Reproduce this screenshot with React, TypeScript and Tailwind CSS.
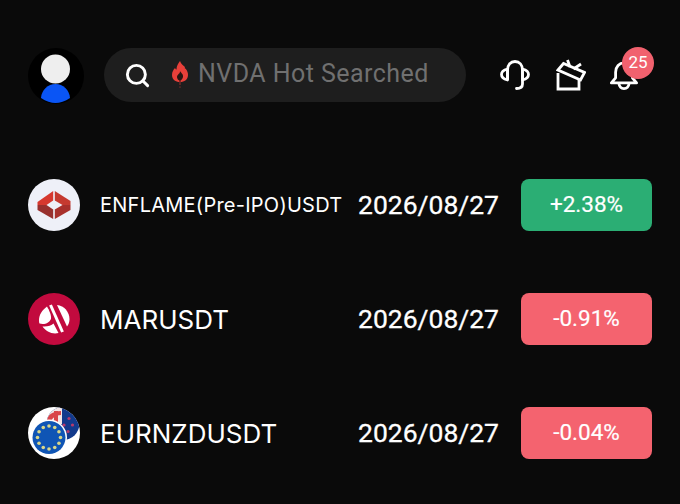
import { Search } from 'lucide-react';

const rows = [
  { name: 'ENFLAME(Pre-IPO)USDT', small: true, change: '+2.38%', up: true, logo: 'enflame' },
  { name: 'MARUSDT', small: false, change: '-0.91%', up: false, logo: 'maru' },
  { name: 'EURNZDUSDT', small: false, change: '-0.04%', up: false, logo: 'eurnzd' },
];

const Avatar = () => (
  <svg width="56" height="56" viewBox="0 0 56 56" className="shrink-0">
    <circle cx="28" cy="28" r="28" fill="#000" />
    <circle cx="27.5" cy="21" r="14.5" fill="#eeeeee" />
    <path d="M13 50C13.5 42 20 36 27.5 36S41.5 42 42 50C37 53.5 32 55 27.5 55S18 53.5 13 50Z" fill="#0a55f5" />
  </svg>
);

const Flame = () => (
  <svg width="18" height="28" viewBox="0 0 18 28" className="shrink-0">
    <path d="M9 0C10 3 12 4 14 6C13.5 7 14 8 14.5 7.5C16.5 10 17 12 17 14C17 18.5 13.5 21 9 21S1 18.5 1 14C1 11 2.5 8.5 4 7C4.5 8 5 8.5 5.5 8.5C5.5 5 7 3 9 0Z" fill="#e8403a" />
    <path d="M9 10C10 12 12.5 13 12 16C11.5 18 10.5 19 9.5 19.5L9.5 21H8.5L8.5 19.5C7 19 6 17.5 6 16C6 14.5 7 14 7.5 13C8.5 12.5 9 11.5 9 10Z" fill="#2a1512" />
    <rect x="8.2" y="21" width="1.6" height="3" fill="#6b2a28" />
    <rect x="8" y="25.5" width="2" height="1.2" fill="#5a2a28" />
  </svg>
);

const Headset = () => (
  <svg width="30" height="30" viewBox="0 0 30 30" fill="none" stroke="#fff" strokeWidth="2.8" strokeLinecap="round" strokeLinejoin="round" className="shrink-0">
    <path d="M7.5 19V10C7.5 5 10.5 1.5 15 1.5S22.5 5 22.5 10V24C22.5 26.5 20.5 28.5 16.5 28.5" />
    <path d="M7.5 9C3.5 10 1.5 12 1.5 14.5S3.5 19 7.5 20Z" />
    <path d="M22.5 9C26.5 10 28.5 12 28.5 14.5S26.5 19 22.5 20Z" />
  </svg>
);

const Gift = () => (
  <svg width="30" height="32" viewBox="0 0 30 32" fill="none" stroke="#fff" strokeWidth="2.8" strokeLinejoin="miter" className="shrink-0">
    <path d="M2 11L7.5 4.5L28.5 13.5L24.5 21L2 11Z" />
    <path d="M2 14V30H23V21" />
    <path d="M14 8L11.5 1M17.5 10L25 5" />
  </svg>
);

const Bell = () => (
  <svg width="28" height="30" viewBox="0 0 30 32" fill="none" stroke="#fff" strokeWidth="3" strokeLinecap="round" strokeLinejoin="round" className="shrink-0">
    <path d="M1.5 24.5H28.5L24 19V13C24 7 20 3 15 3S6 7 6 13V19L1.5 24.5Z" />
    <path d="M9.5 25C10 28.5 12 30.5 15 30.5S20 28.5 20.5 25" />
  </svg>
);

const Logo = ({ type }: { type: string }) => {
  if (type === 'enflame') {
    return (
      <svg width="52" height="52" viewBox="0 0 52 52" className="shrink-0">
        <circle cx="26" cy="26" r="26" fill="#eef0f8" />
        <path d="M25.2 12V21.5L18.5 26H9.5V23Z" fill="#d6382f" />
        <path d="M26.8 12L42.5 22V26H34.5L26.8 21.5Z" fill="#c53a30" />
        <path d="M9.5 26H18.5L25.2 30.5V40L9.5 31Z" fill="#98302e" />
        <path d="M26.8 30.5L34.5 26H42.5V31L26.8 40Z" fill="#a8302c" />
      </svg>
    );
  }
  if (type === 'maru') {
    return (
      <svg width="52" height="52" viewBox="0 0 52 52" className="shrink-0">
        <circle cx="26" cy="26" r="26" fill="#c20a3e" />
        <path d="M19 13.5C14 17 11 22 11 27C11 28.5 11 29.5 11.5 30.5C16 32 22 30 23 25.5C23.5 22 21 17 19 13.5Z" fill="#fff" />
        <path d="M14.5 33.5C19 34 23.5 32.5 25.5 30.5L30.5 40C24 41.5 18 38.5 14.5 33.5Z" fill="#fff" />
        <path d="M22.5 12L34.5 39" stroke="#fff" strokeWidth="3" fill="none" />
        <path d="M29 12C36 12.5 41.5 19 41.5 26C41.5 29 40.5 31.5 39 33.5L29 12Z" fill="#fff" />
      </svg>
    );
  }
  const stars = Array.from({ length: 12 }, (_, i) => {
    const a = (i * Math.PI) / 6;
    return { x: 21 + 11.5 * Math.sin(a), y: 30.5 - 11.5 * Math.cos(a) };
  });
  return (
    <svg width="52" height="52" viewBox="0 0 52 52" className="shrink-0">
      <defs>
        <clipPath id="eur-disc">
          <circle cx="26" cy="26" r="26" />
        </clipPath>
        <clipPath id="nz-disc">
          <circle cx="35" cy="16.5" r="16.5" />
        </clipPath>
      </defs>
      <circle cx="26" cy="26" r="26" fill="#fff" />
      <g clipPath="url(#eur-disc)">
        <g clipPath="url(#nz-disc)">
          <rect x="18" y="0" width="34" height="33" fill="#123a8c" />
          <rect x="18" y="0" width="16" height="17" fill="#f2e6e6" />
          <path d="M19 13C20 8 24 4.5 33 4V8C27 8.5 24 11 23 15Z" fill="#d9454a" />
          <path d="M26 4H30V16H26Z" fill="#d9454a" />
        </g>
        <circle cx="41" cy="11.5" r="1.6" fill="#b83a6c" />
        <circle cx="36" cy="18" r="1.6" fill="#b83a6c" />
        <circle cx="44.5" cy="18" r="1.6" fill="#b83a6c" />
        <circle cx="40" cy="24.5" r="1.6" fill="#b83a6c" />
      </g>
      <circle cx="21" cy="30.5" r="18" fill="#fff" />
      <circle cx="21" cy="30.5" r="16.5" fill="#0f55b5" />
      {stars.map((s, i) => (
        <circle key={i} cx={s.x} cy={s.y} r="1.8" fill="#d8d78a" />
      ))}
    </svg>
  );
};

export default function App() {
  return (
    <div className="w-[680px] h-[504px] bg-[#0a0a0a] overflow-hidden text-white font-['Roboto',sans-serif]">
      <header className="flex items-center pt-12 pl-7 pr-[42px]">
        <Avatar />
        <div className="ml-5 mb-[2px] w-[362px] h-[54px] rounded-full bg-[#1e1e1e] flex items-center pl-[20px]">
          <Search size={27} strokeWidth={2.6} color="#fff" className="shrink-0" />
          <div className="ml-[20px]"><Flame /></div>
          <span className="ml-[9px] mb-[3px] text-[25px] tracking-[0.45px] text-[#707070] whitespace-nowrap">NVDA Hot Searched</span>
        </div>
        <div className="ml-auto mb-[3px] flex items-center">
          <Headset />
          <div className="ml-[26px]"><Gift /></div>
          <div className="relative ml-[24px]">
            <Bell />
            <span className="absolute -top-[13px] -right-[16px] w-[32px] h-[32px] rounded-full bg-[#f1616e] flex items-center justify-center text-[17px] text-white">25</span>
          </div>
        </div>
      </header>

      <div className="mt-[75px] pl-7 pr-7 flex flex-col gap-[62px]">
        {rows.map((row) => (
          <div key={row.name} className="flex items-center h-[52px]">
            <Logo type={row.logo} />
            <span className={`ml-[20px] w-[258px] whitespace-nowrap font-['Inter',sans-serif] ${row.small ? 'text-[20px] tracking-[0.25px]' : 'text-[26px]'}`}>{row.name}</span>
            <span className="w-[163px] text-[26.5px] [-webkit-text-stroke:0.3px_white]">2026/08/27</span>
            <span className={`w-[131px] h-[52px] rounded-lg flex items-center justify-center text-[22.5px] [-webkit-text-stroke:0.2px_white] ${row.up ? 'bg-[#2bae74]' : 'bg-[#f4636f]'}`}>{row.change}</span>
          </div>
        ))}
      </div>
    </div>
  );
}
